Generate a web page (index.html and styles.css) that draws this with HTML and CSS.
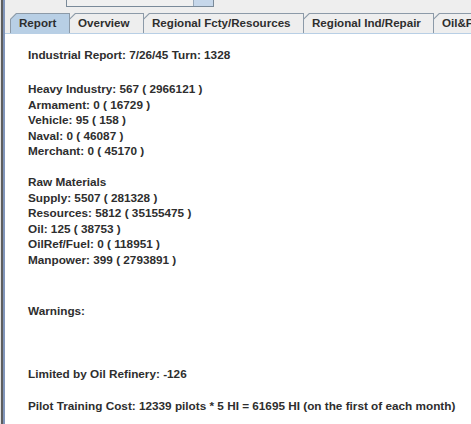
FILE: index.html
```html
<!DOCTYPE html>
<html>
<head>
<meta charset="utf-8">
<link rel="stylesheet" href="styles.css">
</head>
<body>
<div class="window">
  <div class="topbar">
    <div class="combo"><span class="combo-field"></span><span class="combo-btn"></span></div>
  </div>
  <div class="tabs">
    <div class="tab sel w-report"><div class="tab-in">Report</div></div>
    <div class="tab w-overview"><div class="tab-in">Overview</div></div>
    <div class="tab w-fcty"><div class="tab-in">Regional Fcty/Resources</div></div>
    <div class="tab w-ind"><div class="tab-in">Regional Ind/Repair</div></div>
    <div class="tab w-oil"><div class="tab-in">Oil&amp;Fuel</div></div>
  </div>
  <div class="content">
    <div class="line">Industrial Report: 7/26/45 Turn: 1328</div>
    <div class="group g1">
      <div class="line">Heavy Industry: 567 ( 2966121 )</div>
      <div class="line">Armament: 0 ( 16729 )</div>
      <div class="line">Vehicle: 95 ( 158 )</div>
      <div class="line">Naval: 0 ( 46087 )</div>
      <div class="line">Merchant: 0 ( 45170 )</div>
    </div>
    <div class="group g2">
      <div class="line">Raw Materials</div>
      <div class="line">Supply: 5507 ( 281328 )</div>
      <div class="line">Resources: 5812 ( 35155475 )</div>
      <div class="line">Oil: 125 ( 38753 )</div>
      <div class="line">OilRef/Fuel: 0 ( 118951 )</div>
      <div class="line">Manpower: 399 ( 2793891 )</div>
    </div>
    <div class="line g3">Warnings:</div>
    <div class="line g4">Limited by Oil Refinery: -126</div>
    <div class="line g5">Pilot Training Cost: 12339 pilots * 5 HI = 61695 HI (on the first of each month)</div>
  </div>
</div>
</body>
</html>
```

FILE: styles.css
```css
html, body {
  margin: 0;
  padding: 0;
  background: #eeeeee;
}
.window {
  width: 471px;
  height: 424px;
  overflow: hidden;
  display: flex;
  flex-direction: column;
  border-left: 1px solid #e2e2e2;
  box-sizing: border-box;
  position: relative;
  font-family: "Liberation Sans", Arial, sans-serif;
  color: #2e2e2e;
}
.window::before {
  content: "";
  position: absolute;
  left: 0;
  top: 0;
  bottom: 0;
  width: 2px;
  background: #5e5e5e;
  z-index: 2;
}
.window::after {
  content: "";
  position: absolute;
  left: 2px;
  top: 0;
  bottom: 0;
  width: 2px;
  background: #8195ba;
  z-index: 2;
}
.topbar {
  height: 13px;
  flex: none;
  background: #eeeeee;
  position: relative;
}
.combo {
  margin-left: 65px;
  width: 148px;
  height: 7px;
  display: flex;
  box-sizing: border-box;
  border: 1px solid #7a8a99;
  border-top: none;
  background: #eeeeee;
}
.combo-field {
  flex: 1;
  background: #f0f0f0;
}
.combo-btn {
  width: 19px;
  background: #c6d7ea;
  border-left: 1px solid #9aaabb;
}
.tabs {
  flex: none;
  height: 20px;
  display: flex;
  align-items: flex-end;
  padding-left: 9px;
  background: #eeeeee;
}
.tab {
  height: 20px;
  box-sizing: border-box;
  background: #8c9aa8;
  clip-path: polygon(6px 0, 100% 0, 100% 100%, 0 100%, 0 6px);
  padding: 1px 1px 0 1px;
  margin-right: -1px;
  flex: none;
}
.tab-in {
  height: 100%;
  box-sizing: border-box;
  background: #eeeeee;
  clip-path: polygon(5.6px 0, 100% 0, 100% 100%, 0 100%, 0 5.6px);
  font-size: 11.6px;
  font-weight: bold;
  line-height: 18px;
  padding-left: 8px;
  white-space: nowrap;
  color: #2e2e2e;
}
.tab.sel .tab-in {
  background: #b8cfe5;
}
.w-report { width: 60px; }
.w-overview { width: 75px; }
.w-fcty { width: 161px; }
.w-ind { width: 131px; }
.w-oil { width: 60px; }
.content {
  flex: 1;
  background: #ffffff;
  border-top: 1px solid #b8cfe5;
  margin-left: 4px;
  padding: 13px 0 0 23px;
  font-size: 11.75px;
  font-weight: bold;
}
.line {
  line-height: 15.5px;
  white-space: nowrap;
}
.g1 { margin-top: 18.5px; }
.g2 { margin-top: 15.5px; }
.g3 { margin-top: 36px; }
.g4 { margin-top: 47.5px; }
.g5 { margin-top: 16.5px; }
```
